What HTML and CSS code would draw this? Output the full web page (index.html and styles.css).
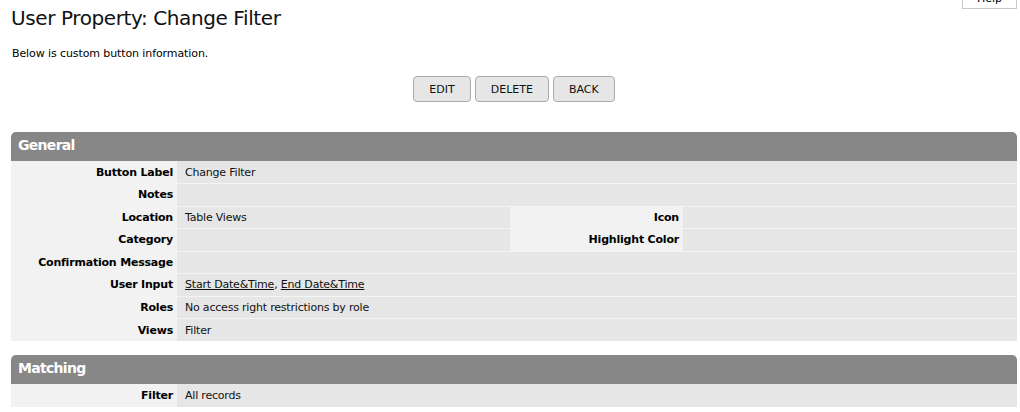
FILE: index.html
```html
<!DOCTYPE html>
<html>
<head>
<meta charset="utf-8">
<link rel="stylesheet" href="styles.css">
</head>
<body>
<div class="page">
  <button class="help">Help</button>
  <h1 class="title">User Property: Change Filter</h1>
  <p class="intro">Below is custom button information.</p>
  <div class="actions">
    <button class="btn">EDIT</button>
    <button class="btn">DELETE</button>
    <button class="btn">BACK</button>
  </div>

  <div class="section">
    <div class="sec-head">General</div>
    <table class="props">
      <colgroup><col class="c-lab"><col class="c-val"><col class="c-lab2"><col></colgroup>
      <tr><th>Button Label</th><td colspan="3">Change Filter</td></tr>
      <tr><th>Notes</th><td colspan="3"></td></tr>
      <tr><th>Location</th><td>Table Views</td><th>Icon</th><td></td></tr>
      <tr><th>Category</th><td></td><th>Highlight Color</th><td></td></tr>
      <tr><th>Confirmation Message</th><td colspan="3"></td></tr>
      <tr><th>User Input</th><td colspan="3"><a href="#">Start Date&amp;Time</a>, <a href="#">End Date&amp;Time</a></td></tr>
      <tr><th>Roles</th><td colspan="3">No access right restrictions by role</td></tr>
      <tr><th>Views</th><td colspan="3">Filter</td></tr>
    </table>
  </div>

  <div class="section">
    <div class="sec-head">Matching</div>
    <table class="props">
      <colgroup><col class="c-lab"><col></colgroup>
      <tr><th>Filter</th><td>All records</td></tr>
    </table>
  </div>
</div>
</body>
</html>
```

FILE: styles.css
```css
html, body {
  margin: 0;
  padding: 0;
  background: #fff;
}
body {
  font-family: "DejaVu Sans", Verdana, sans-serif;
  font-size: 11px;
  color: #000;
}
.page {
  padding: 0 3px 0 11px;
}
.help {
  float: right;
  margin-top: -12px;
  width: 55px;
  height: 21px;
  background: #fff;
  border: 1px solid #c8c8c8;
  font-family: inherit;
  font-size: 11px;
  color: #000;
  padding: 0;
}
.title {
  margin: 0;
  padding-top: 6px;
  font-family: "DejaVu Sans", Verdana, sans-serif;
  font-weight: normal;
  font-size: 20px;
  letter-spacing: -0.4px;
  line-height: 24px;
  color: #111;
}
.intro {
  margin: 17px 0 0 1px;
  line-height: 14px;
  letter-spacing: -0.1px;
}
.actions {
  display: flex;
  justify-content: center;
  gap: 4px;
  margin-top: 15px;
}
.btn {
  height: 26px;
  padding: 0 15px;
  background: #e6e6e6;
  border: 1px solid #a9a9a9;
  border-radius: 4px;
  font-family: inherit;
  font-size: 11px;
  color: #111;
}
.section {
  margin-top: 30px;
}
.section + .section {
  margin-top: 14px;
}
.sec-head {
  background: #878787;
  color: #fff;
  font-weight: bold;
  font-size: 14px;
  letter-spacing: -0.7px;
  height: 29px;
  line-height: 27px;
  padding-left: 7px;
  border-radius: 5px 5px 0 0;
}
.props {
  width: 100%;
  border-collapse: collapse;
  table-layout: fixed;
}
.c-lab { width: 166px; }
.c-val { width: 333px; }
.c-lab2 { width: 173px; }
.props th, .props td {
  height: 22.5px;
  padding: 0 4px;
  box-sizing: border-box;
  border-bottom: 1px solid #f4f4f4;
  letter-spacing: -0.2px;
  white-space: nowrap;
}
.props tr:last-child th, .props tr:last-child td {
  border-bottom: none;
}
.props th {
  background: #f2f2f2;
  text-align: right;
  font-weight: bold;
}
.props td {
  background: #e6e6e6;
  text-align: left;
  padding-left: 8px;
  color: #111;
}
.props a {
  color: #111;
  text-decoration: underline;
}
```
